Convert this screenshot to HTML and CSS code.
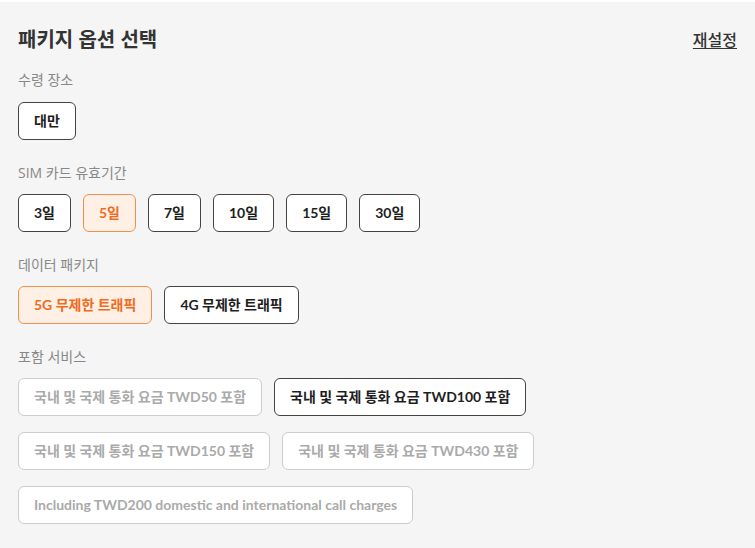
FILE: index.html
```html
<!DOCTYPE html>
<html lang="ko">
<head>
<meta charset="utf-8">
<title>패키지 옵션 선택</title>
<link rel="stylesheet" href="styles.css">
</head>
<body>
<div class="panel">
  <div class="header">
    <h2 class="title">패키지 옵션 선택</h2>
    <a class="reset" href="#">재설정</a>
  </div>

  <section class="group">
    <div class="label">수령 장소</div>
    <div class="options">
      <button class="opt">대만</button>
    </div>
  </section>

  <section class="group">
    <div class="label">SIM 카드 유효기간</div>
    <div class="options">
      <button class="opt">3일</button>
      <button class="opt selected">5일</button>
      <button class="opt">7일</button>
      <button class="opt">10일</button>
      <button class="opt">15일</button>
      <button class="opt">30일</button>
    </div>
  </section>

  <section class="group">
    <div class="label">데이터 패키지</div>
    <div class="options">
      <button class="opt selected">5G 무제한 트래픽</button>
      <button class="opt">4G 무제한 트래픽</button>
    </div>
  </section>

  <section class="group">
    <div class="label">포함 서비스</div>
    <div class="options">
      <button class="opt disabled">국내 및 국제 통화 요금 TWD50 포함</button>
      <button class="opt">국내 및 국제 통화 요금 TWD100 포함</button>
      <button class="opt disabled">국내 및 국제 통화 요금 TWD150 포함</button>
      <button class="opt disabled">국내 및 국제 통화 요금 TWD430 포함</button>
      <button class="opt disabled">Including TWD200 domestic and international call charges</button>
    </div>
  </section>
</div>
</body>
</html>
```

FILE: styles.css
```css
html, body {
  margin: 0;
  padding: 0;
  background: #ffffff;
}

body {
  font-family: "Open Sans", "Noto Sans CJK KR", sans-serif;
  color: #333333;
}

.panel {
  margin-top: 2px;
  background: #f5f5f5;
  padding: 24px 18px 30px 18px;
  min-height: 500px;
}

.header {
  display: flex;
  justify-content: space-between;
  align-items: center;
  height: 28px;
}

.title {
  margin: 0;
  font-size: 20px;
  line-height: 28px;
  font-weight: 700;
  color: #333333;
}

.reset {
  font-size: 16px;
  line-height: 20px;
  font-weight: 500;
  color: #333333;
  text-decoration: underline;
  text-underline-offset: 2px;
}

.group {
  margin-top: 16px;
}

.group + .group {
  margin-top: 23px;
}

.label {
  font-size: 14px;
  line-height: 20px;
  color: #888888;
  margin-bottom: 12px;
}

.group + .group .label {
  margin-bottom: 11px;
}

.options {
  display: flex;
  flex-wrap: wrap;
  gap: 16px 12px;
}

.opt {
  box-sizing: border-box;
  height: 38px;
  padding: 0 15px;
  border: 1px solid #444444;
  border-radius: 6px;
  background: #ffffff;
  font-family: Lato, "Noto Sans CJK KR", sans-serif;
  font-size: 14px;
  line-height: 20px;
  font-weight: 700;
  color: #1e1e1e;
  cursor: pointer;
  white-space: nowrap;
}

.opt.selected {
  border-color: #f0904c;
  background: #fff0e5;
  color: #f06a1e;
}

.opt.disabled {
  border-color: #cccccc;
  color: #aaaaaa;
}
```
